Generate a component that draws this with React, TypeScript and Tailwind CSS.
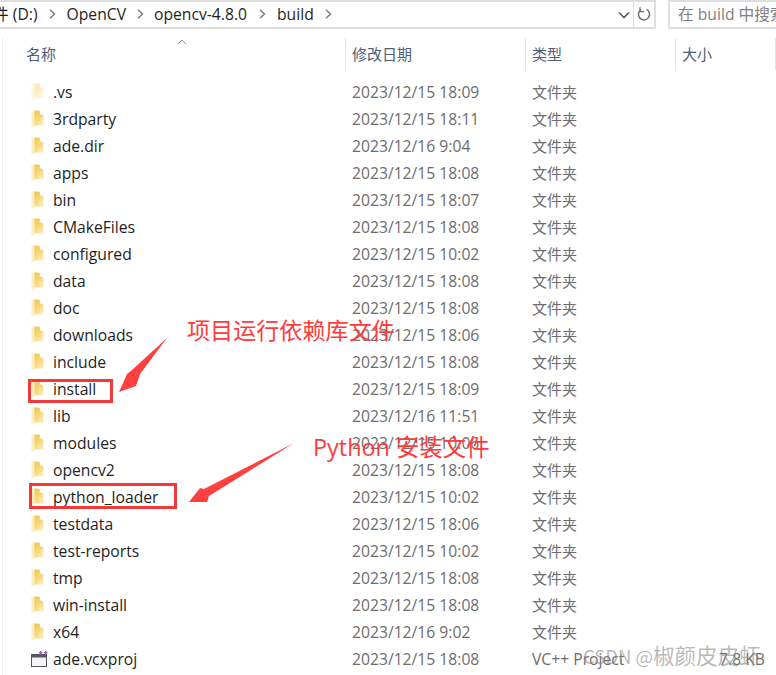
const CJK = `"Noto Sans CJK SC", sans-serif`;

type Row = { name: string; date: string; type?: string; size?: string; faded?: boolean; file?: boolean };

const rows: Row[] = [
  { name: ".vs", date: "2023/12/15 18:09", faded: true },
  { name: "3rdparty", date: "2023/12/15 18:11" },
  { name: "ade.dir", date: "2023/12/16 9:04" },
  { name: "apps", date: "2023/12/15 18:08" },
  { name: "bin", date: "2023/12/15 18:07" },
  { name: "CMakeFiles", date: "2023/12/15 18:08" },
  { name: "configured", date: "2023/12/15 10:02" },
  { name: "data", date: "2023/12/15 18:08" },
  { name: "doc", date: "2023/12/15 18:08" },
  { name: "downloads", date: "2023/12/15 18:06" },
  { name: "include", date: "2023/12/15 18:08" },
  { name: "install", date: "2023/12/15 18:09" },
  { name: "lib", date: "2023/12/16 11:51" },
  { name: "modules", date: "2023/12/15 10:06" },
  { name: "opencv2", date: "2023/12/15 18:08" },
  { name: "python_loader", date: "2023/12/15 10:02" },
  { name: "testdata", date: "2023/12/15 18:06" },
  { name: "test-reports", date: "2023/12/15 10:02" },
  { name: "tmp", date: "2023/12/15 18:08" },
  { name: "win-install", date: "2023/12/15 18:08" },
  { name: "x64", date: "2023/12/16 9:02" },
  { name: "ade.vcxproj", date: "2023/12/15 18:08", type: "VC++ Project", size: "7.8 KB", file: true },
];

function Folder({ faded }: { faded?: boolean }) {
  const id = faded ? "fa" : "fb";
  return (
    <svg width="14" height="18" viewBox="0 0 14 18" className={faded ? "opacity-40" : ""}>
      <defs>
        <linearGradient id={id} x1="0" y1="0" x2="0.6" y2="1">
          <stop offset="0" stopColor="#f2c552" />
          <stop offset="0.6" stopColor="#f8d77c" />
          <stop offset="1" stopColor="#fdeab2" />
        </linearGradient>
      </defs>
      <path d="M0.5 0.5 H4 V15.5 L1 17.5 H0.5 Z" fill="#fdefc0" />
      <path d="M3.5 0.5 H8 L9 1.5 V4 L12.5 5.5 V15.5 H3.5 Z" fill={`url(#${id})`} />
    </svg>
  );
}

function ProjectIcon() {
  return (
    <svg width="18" height="17" viewBox="0 0 18 17">
      <rect x="0.5" y="3.5" width="15" height="12" fill="#f4f4f4" stroke="#55595d" />
      <rect x="1" y="4" width="14" height="2.5" fill="#55595d" />
      <path d="M8 1.7h3.4M9.7 0v3.4M13 1.7h3.4M14.7 0v3.4" stroke="#a35cb8" strokeWidth="1.4" fill="none" />
    </svg>
  );
}

function Crumb() {
  return (
    <svg width="7" height="10" viewBox="0 0 7 10" className="shrink-0">
      <path d="M1 0.8 L5.5 5 L1 9.2" stroke="#7b7b7b" strokeWidth="1.4" fill="none" />
    </svg>
  );
}

export default function App() {
  return (
    <div
      className="relative h-[675px] w-[776px] overflow-hidden bg-white text-[15.7px] text-[#1e1e1e]"
      style={{ fontFamily: `"Open Sans", ${CJK}` }}
    >
      {/* top bar */}
      <div className="flex h-[29px] items-stretch">
        <div className="flex w-[656px] items-center justify-between border-y-2 border-r-2 border-l-0 border-[#dedede]">
          <div className="flex items-center overflow-hidden">
            <span className="-ml-[7px] whitespace-nowrap">件 (D:)</span>
            <span className="ml-[11px]"><Crumb /></span>
            <span className="ml-[11px]">OpenCV</span>
            <span className="ml-[11px]"><Crumb /></span>
            <span className="ml-[10px]">opencv-4.8.0</span>
            <span className="ml-[12px]"><Crumb /></span>
            <span className="ml-[11px]">build</span>
            <span className="ml-[11px]"><Crumb /></span>
          </div>
          <div className="flex h-full items-center">
            <svg width="12" height="8" viewBox="0 0 12 8" className="mr-[3px]">
              <path d="M1 1.5 L6 6.5 L11 1.5" stroke="#5a5a5a" strokeWidth="1.6" fill="none" />
            </svg>
            <div className="flex h-full w-[21px] items-center justify-center border-l border-[#dedede]">
              <svg width="15" height="15" viewBox="0 0 15 15">
                <path d="M9.5 2.3 A5.6 5.6 0 1 1 4 2.6" stroke="#6f6f6f" strokeWidth="1.5" fill="none" />
                <path d="M3 0.3 V4.6 H7.2" stroke="#6f6f6f" strokeWidth="1.3" fill="none" />
              </svg>
            </div>
          </div>
        </div>
        <div className="ml-[12px] flex flex-1 items-center overflow-hidden border-y-2 border-l-2 border-[#dedede] pl-[8px] whitespace-nowrap text-[#808080]">
          在 build 中搜索
        </div>
      </div>

      {/* list */}
      <div className="mt-[9px] ml-[2px] h-[637px] border-l border-[#eeeeee] pl-0">
        {/* header */}
        <div className="relative flex h-[32px] text-[15px] text-[#4c607a]">
          <div className="flex h-[32px] w-[343px] items-center border-r border-[#e5e5e5] pl-[23px]">名称</div>
          <div className="flex h-[32px] w-[180px] items-center border-r border-[#e5e5e5] pl-[6px]">修改日期</div>
          <div className="flex h-[32px] w-[150px] items-center border-r border-[#e5e5e5] pl-[6px]">类型</div>
          <div className="flex h-[32px] w-[100px] items-center border-r border-[#e5e5e5] pl-[6px]">大小</div>
          <svg width="10" height="6" viewBox="0 0 10 6" className="absolute top-[1px] left-[174px]">
            <path d="M1 5 L5 1 L9 5" stroke="#8a8a8a" strokeWidth="1" fill="none" />
          </svg>
        </div>
        <div className="pt-[9px]">
          {rows.map((r) => (
            <div key={r.name} className="flex h-[27px] items-center whitespace-nowrap">
              <div className="flex w-[349px] items-center pl-[28px]">
                <div className="flex w-[22px] items-center">
                  {r.file ? <ProjectIcon /> : <Folder faded={r.faded} />}
                </div>
                <span>{r.name}</span>
              </div>
              <div className="w-[180px] text-[#6d6d6d]">{r.date}</div>
              <div className={`w-[118px] text-[#6d6d6d] ${r.type ? "" : "text-[15px]"}`}>{r.type ?? "文件夹"}</div>
              <div className="w-[115px] text-right text-[#6d6d6d]">{r.size ?? ""}</div>
            </div>
          ))}
        </div>
      </div>

      {/* annotations */}
      <div className="pointer-events-none absolute top-[379px] left-[28px] h-[24px] w-[85px] border-[3px] border-[#f03a3a]" />
      <div className="pointer-events-none absolute top-[483px] left-[29px] h-[26px] w-[148px] border-[3px] border-[#f03a3a]" />
      <svg width="776" height="675" className="pointer-events-none absolute top-0 left-0">
        <polygon points="167,338 140,374 136,386 119,392 127,374 132,370" fill="#ff4040" />
        <polygon points="294,443 209,496 207,502 189,502 200,488 204,489" fill="#ff4040" />
      </svg>
      <div
        className="absolute top-[313px] left-[187px] text-[23.1px] leading-[32px] whitespace-nowrap text-[#ff3b3b]"
        style={{ fontFamily: CJK }}
      >
        项目运行依赖库文件
      </div>
      <div
        className="absolute top-[431px] left-[313px] text-[23.4px] leading-[32px] whitespace-nowrap text-[#ff3b3b]"
        style={{ fontFamily: `"Open Sans", ${CJK}` }}
      >
        Python 安装文件
      </div>
      <div
        className="absolute top-[641px] left-[583px] text-[21.5px] leading-[28px] whitespace-nowrap text-[#8a8a8a]/60"
        style={{ fontFamily: CJK }}
      >
        <span className="text-[18.5px]">CSDN @</span>椒颜皮皮虾
      </div>
    </div>
  );
}
